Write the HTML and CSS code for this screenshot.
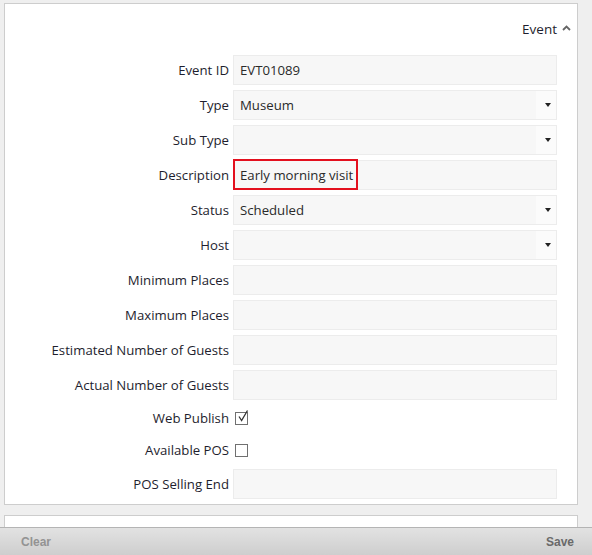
FILE: index.html
```html
<!DOCTYPE html>
<html lang="en">
<head>
    <meta charset="UTF-8">
    <title>Event</title>
    <link rel="stylesheet" href="styles.css">
</head>
<body>
    <div class="panel">
        <div class="panel-header">
            <span class="panel-title">Event</span>
            <svg class="caret" width="9" height="6" viewBox="0 0 9 6"><path d="M1 5 L4.5 1.5 L8 5" fill="none" stroke="#666" stroke-width="1.8"/></svg>
        </div>

        <div class="form">
            <label class="form-label">Event ID</label>
            <div class="field">EVT01089</div>

            <label class="form-label">Type</label>
            <div class="field select">Museum<span class="arrow"></span></div>

            <label class="form-label">Sub Type</label>
            <div class="field select"><span class="arrow"></span></div>

            <label class="form-label">Description</label>
            <div class="field">Early morning visit<span class="highlight"></span></div>

            <label class="form-label">Status</label>
            <div class="field select">Scheduled<span class="arrow"></span></div>

            <label class="form-label">Host</label>
            <div class="field select"><span class="arrow"></span></div>

            <label class="form-label">Minimum Places</label>
            <div class="field"></div>

            <label class="form-label">Maximum Places</label>
            <div class="field"></div>

            <label class="form-label">Estimated Number of Guests</label>
            <div class="field"></div>

            <label class="form-label">Actual Number of Guests</label>
            <div class="field"></div>

            <label class="form-label check-row">Web Publish</label>
            <div class="check-row">
                <span class="checkbox">
                    <svg width="13" height="13" viewBox="0 0 13 13"><path d="M3 6.5 L5.6 10.5 L11.5 0.5" fill="none" stroke="#333" stroke-width="1.3"/></svg>
                </span>
            </div>

            <label class="form-label check-row">Available POS</label>
            <div class="check-row"><span class="checkbox"></span></div>

            <label class="form-label">POS Selling End</label>
            <div class="field"></div>
        </div>
    </div>

    <div class="panel panel-next"></div>

    <div class="toolbar">
        <span class="tool-btn muted">Clear</span>
        <span class="tool-btn">Save</span>
    </div>
</body>
</html>
```

FILE: styles.css
```css
:root {
    --page-bg: #efefef;
    --field-bg: #f7f7f7;
    --field-border: #ececec;
    --text-color: #1e1e2e;
}
body {
    margin: 0;
    background-color: var(--page-bg);
    font-family: "Open Sans", "Noto Sans", sans-serif;
    font-size: 13.2px;
    color: var(--text-color);
    height: 555px;
    overflow: hidden;
}
.panel {
    background-color: white;
    border: 1px solid #cdcdcd;
    width: 572px;
    margin: 3px 0 0 4px;
    padding: 0 0 5px 0;
}
.panel-header {
    display: flex;
    justify-content: flex-end;
    align-items: center;
    height: 20px;
    padding: 15px 6px 0 0;
    gap: 5px;
}
.panel-title {
    font-size: 13.5px;
}
.caret {
    margin-top: -2px;
}
.form {
    display: grid;
    grid-template-columns: 1fr 324px;
    column-gap: 4px;
    row-gap: 5px;
    padding: 16px 20px 0 0;
}
.form-label {
    text-align: right;
    line-height: 30px;
    white-space: nowrap;
}
.field {
    position: relative;
    height: 28px;
    line-height: 28px;
    border: 1px solid var(--field-border);
    background-color: var(--field-bg);
    padding: 0 6px;
    color: #2a2a2a;
}
.select {
    background: linear-gradient(to right, var(--field-bg) 0, var(--field-bg) 302px, #fbfbfb 302px);
}
.arrow {
    position: absolute;
    right: 5px;
    top: 12px;
    width: 0;
    height: 0;
    border-left: 3.5px solid transparent;
    border-right: 3.5px solid transparent;
    border-top: 4px solid #222;
}
.highlight {
    position: absolute;
    left: -1px;
    top: -2px;
    width: 121px;
    height: 27px;
    border: 2px solid #e3101e;
}
.check-row {
    height: 27px;
    line-height: 27px;
    display: flex;
    align-items: center;
}
.form-label.check-row {
    justify-content: flex-end;
}
.checkbox {
    display: block;
    width: 11px;
    height: 11px;
    border: 1px solid #707070;
    background-color: white;
    margin-left: 2px;
    position: relative;
}
.checkbox svg {
    position: absolute;
    left: 0;
    top: -3px;
}
.panel-next {
    height: 20px;
    margin-top: 10px;
}
.toolbar {
    position: fixed;
    left: 0;
    right: 0;
    bottom: 0;
    height: 27px;
    border-top: 1px solid #b4b4b4;
    background: linear-gradient(to bottom, #e2e2e2, #cecece);
    display: flex;
    justify-content: space-between;
    align-items: center;
    padding: 0 18px 0 21px;
}
.tool-btn {
    font-family: "Liberation Sans", Arial, sans-serif;
    font-weight: bold;
    font-size: 12px;
    color: #6a6a6a;
}
.tool-btn.muted {
    color: #939393;
}
```
